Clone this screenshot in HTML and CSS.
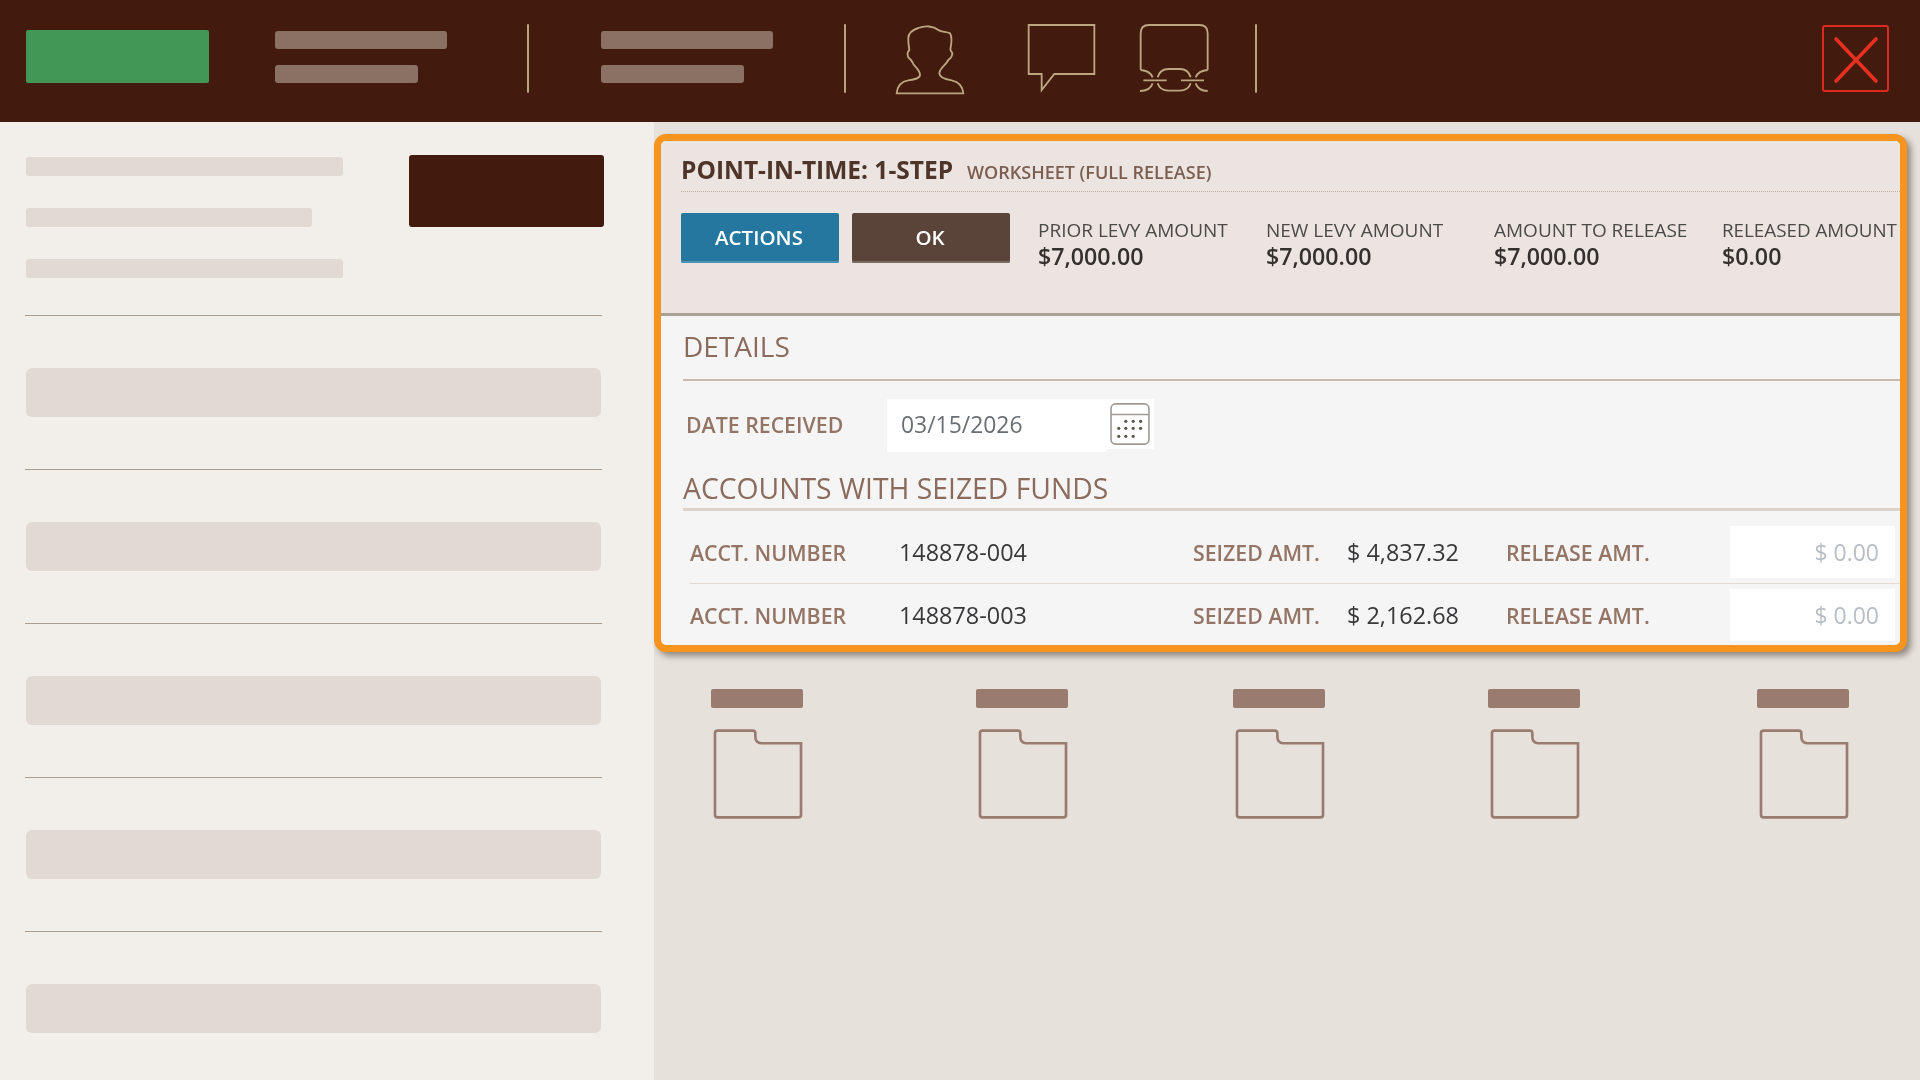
FILE: index.html
```html
<!DOCTYPE html>
<html lang="en">
<head>
<meta charset="utf-8">
<title>Point-in-Time: 1-Step</title>
<link rel="stylesheet" href="styles.css">
</head>
<body>
<svg class="defs" width="0" height="0" aria-hidden="true">
  <symbol id="folder" viewBox="100 175 270 272">
    <path d="M105 188Q105 180 113 180H219Q227 180 227 188V198Q227 218 245 218H365V434Q365 442 357 442H113Q105 442 105 434Z"/>
  </symbol>
</svg>
<header class="topbar">
  <div class="brand"></div>
  <div class="bars bars-a"><span class="bar long"></span><span class="bar short"></span></div>
  <span class="vline vline-a"></span>
  <div class="bars bars-b"><span class="bar long"></span><span class="bar short"></span></div>
  <span class="vline vline-b"></span>
  <svg class="tool tool-user" viewBox="165 75 210 210" width="70" height="70"><path d="M170 280H370C368 258 355 245 335 241C315 238 298 232 298 220C298 205 318 195 325 180C332 175 337 168 337 160C335 155 331 152 331 148C335 130 336 110 330 100C320 93 305 98 295 90C280 78 255 76 235 84C215 90 205 100 205 115C204 130 207 140 208 150C203 155 202 165 205 172C210 178 215 180 218 188C222 200 240 208 240 225C240 235 225 238 205 241C185 244 172 258 170 280Z"/></svg>
  <svg class="tool tool-chat" viewBox="560 72 210 210" width="70" height="70"><path d="M565 75H762V222H642L604 270V222H565Z"/></svg>
  <svg class="tool tool-link" viewBox="897 72 210 210" width="70" height="70"><path d="M902 210V100Q902 75 927 75H1078Q1103 75 1103 100V210M902 210Q930 212 938 232M900 273Q930 273 938 250M910 241H980M953 232Q960 207 985 207H1020Q1045 207 1052 232M953 250Q960 272 985 272H1020Q1045 272 1052 250M1103 210Q1075 212 1067 232M1103 273Q1075 273 1067 250M1023 241H1092"/></svg>
  <span class="vline vline-c"></span>
  <button class="close" aria-label="Close"><svg viewBox="0 0 62 62" width="62" height="62"><path d="M11 11L51 53M51 11L11 53"/></svg></button>
</header>

<div class="layout">
  <aside class="sidebar">
    <div class="side-top">
      <div class="side-lines">
        <span class="ph ph-a"></span>
        <span class="ph ph-b"></span>
        <span class="ph ph-a"></span>
      </div>
      <div class="side-btn"></div>
    </div>
    <div class="side-row"><span class="ph-row"></span></div>
    <div class="side-row"><span class="ph-row"></span></div>
    <div class="side-row"><span class="ph-row"></span></div>
    <div class="side-row"><span class="ph-row"></span></div>
    <div class="side-row"><span class="ph-row"></span></div>
  </aside>

  <main class="content">
    <section class="panel">
      <div class="panel-head">
        <div class="title-row">
          <h1 class="title">POINT-IN-TIME: 1-STEP</h1>
          <span class="subtitle">WORKSHEET (FULL RELEASE)</span>
        </div>
        <div class="action-row">
          <button class="btn btn-blue">ACTIONS</button>
          <button class="btn btn-brown">OK</button>
          <div class="stats">
            <div class="stat"><span class="stat-label">PRIOR LEVY AMOUNT</span><span class="stat-value">$7,000.00</span></div>
            <div class="stat"><span class="stat-label">NEW LEVY AMOUNT</span><span class="stat-value">$7,000.00</span></div>
            <div class="stat"><span class="stat-label">AMOUNT TO RELEASE</span><span class="stat-value">$7,000.00</span></div>
            <div class="stat"><span class="stat-label stat-label-last">RELEASED AMOUNT</span><span class="stat-value">$0.00</span></div>
          </div>
        </div>
      </div>
      <div class="panel-body">
        <h2 class="section section-details">DETAILS</h2>
        <div class="date-row">
          <span class="field-label date-label">DATE RECEIVED</span>
          <div class="date-input">03/15/2026</div>
          <div class="cal-wrap">
            <svg class="cal" viewBox="85 33 130 137" width="42" height="44">
              <rect class="cal-frame" x="91" y="39" width="118" height="125" rx="14"/>
              <path class="cal-frame" d="M91 72H209"/>
              <g class="cal-dots">
                <circle cx="137" cy="93" r="5"/><circle cx="160" cy="93" r="5"/><circle cx="183" cy="93" r="5"/>
                <circle cx="115" cy="115" r="5"/><circle cx="137" cy="115" r="5"/><circle cx="160" cy="115" r="5"/><circle cx="183" cy="115" r="5"/>
                <circle cx="115" cy="140" r="5"/><circle cx="137" cy="140" r="5"/><circle cx="160" cy="140" r="5"/>
              </g>
            </svg>
          </div>
        </div>
        <h2 class="section section-accounts">ACCOUNTS WITH SEIZED FUNDS</h2>
        <div class="acct acct-first">
          <span class="field-label">ACCT. NUMBER</span>
          <span class="acct-value">148878-004</span>
          <span class="field-label">SEIZED AMT.</span>
          <span class="acct-value">$ 4,837.32</span>
          <span class="field-label">RELEASE AMT.</span>
          <div class="amt-input">$ 0.00</div>
        </div>
        <div class="acct acct-second">
          <span class="field-label">ACCT. NUMBER</span>
          <span class="acct-value">148878-003</span>
          <span class="field-label">SEIZED AMT.</span>
          <span class="acct-value">$ 2,162.68</span>
          <span class="field-label">RELEASE AMT.</span>
          <div class="amt-input">$ 0.00</div>
        </div>
      </div>
    </section>

    <div class="folders">
      <div class="folder"><span class="folder-tag"></span><svg class="folder-icon"><use href="#folder"/></svg></div>
      <div class="folder"><span class="folder-tag"></span><svg class="folder-icon"><use href="#folder"/></svg></div>
      <div class="folder"><span class="folder-tag"></span><svg class="folder-icon"><use href="#folder"/></svg></div>
      <div class="folder"><span class="folder-tag"></span><svg class="folder-icon"><use href="#folder"/></svg></div>
      <div class="folder"><span class="folder-tag"></span><svg class="folder-icon"><use href="#folder"/></svg></div>
    </div>
  </main>
</div>
</body>
</html>
```

FILE: styles.css
```css
* { box-sizing: border-box; }
html, body { margin: 0; height: 100%; }
body {
  width: 1920px;
  height: 1080px;
  overflow: hidden;
  font-family: "Open Sans", "Liberation Sans", sans-serif;
  background: #e6e1db;
}
.defs { display: block; height: 0; }
h1, h2 { margin: 0; }

/* top bar */
.topbar {
  height: 122px;
  background: #431a0e;
  display: flex;
  align-items: flex-start;
}
.brand {
  width: 183px;
  height: 53px;
  margin: 30px 0 0 26px;
  background: #429757;
  border-radius: 2px;
}
.bars { display: flex; flex-direction: column; gap: 16px; margin-top: 31px; }
.bars-a { width: 172px; margin-left: 66px; }
.bars-b { width: 172px; margin-left: 72px; }
.bar { display: block; height: 18px; background: #8b7163; border-radius: 3px; }
.bar.long { width: 172px; }
.bar.short { width: 143px; }
.vline { width: 2px; height: 69px; margin-top: 24px; background: #b9a37f; border-radius: 1px; }
.vline-a { margin-left: 80px; }
.vline-b { margin-left: 71px; }
.vline-c { margin-left: 46px; }
.tool { fill: none; stroke: #bca680; stroke-width: 5.5; margin-top: 25px; }
.tool-user { margin-left: 49px; }
.tool-chat { margin-left: 62px; margin-top: 24px; }
.tool-link { margin-left: 42px; margin-top: 24px; }
.close {
  width: 67px;
  height: 67px;
  margin: 25px 0 0 565px;
  padding: 0;
  display: flex;
  align-items: center;
  justify-content: center;
  background: none;
  border: 2px solid #dd2a20;
  border-radius: 3px;
}
.close path { fill: none; stroke: #e8301f; stroke-width: 3.6; stroke-linecap: round; }

/* layout */
.layout { display: grid; grid-template-columns: 654px minmax(0, 1fr); height: 958px; }

/* sidebar */
.sidebar { background: #f2eeea; padding: 33px 52px 0 25px; }
.side-top {
  display: flex;
  justify-content: space-between;
  height: 161px;
  border-bottom: 1.5px solid #a89e94;
}
.side-lines { display: flex; flex-direction: column; gap: 32px; padding: 2px 0 0 1px; }
.ph { display: block; height: 19px; background: #e1dad4; border-radius: 3px; }
.ph-a { width: 317px; }
.ph-b { width: 286px; }
.side-btn { width: 195px; height: 72px; margin-right: -2px; background: #431a0e; border-radius: 3px; }
.side-row {
  height: 154px;
  padding: 52px 0 0 1px;
  border-bottom: 1.5px solid #a89e94;
}
.side-row:last-child { border-bottom: none; }
.ph-row { display: block; width: 575px; height: 49px; background: #e1dad4; border-radius: 6px; }

/* panel */
.content { min-width: 0; padding: 12px 13px 0 0; }
.panel {
  height: 518px;
  border: 7px solid #f7941d;
  border-radius: 12px;
  background: #f5f5f5;
  box-shadow: 4px 4px 6px rgba(40, 30, 20, .45);
  overflow: hidden;
}
.panel-head {
  height: 175px;
  padding-left: 20px;
  background: #ebe4e0;
  border-bottom: 3px solid #a9a097;
}
.title-row {
  display: flex;
  align-items: baseline;
  gap: 14px;
  height: 51px;
  padding-top: 13px;
  border-bottom: 1.5px dotted #bfafa4;
}
.title { font-size: 24.5px; font-weight: 700; line-height: 32px; color: #4f3529; filter: blur(.5px); }
.subtitle { font-size: 18px; font-weight: 600; color: #7b5e50; filter: blur(.5px); }
.action-row { display: flex; margin-top: 21px; gap: 13px; }
.btn {
  width: 158px;
  height: 50px;
  padding: 0 2px 2px 0;
  border: none;
  border-radius: 2px;
  font: 600 20.5px "Open Sans", sans-serif;
  color: #fff;
  filter: blur(.4px);
}
.btn-blue { background: #26779f; box-shadow: inset 0 -2px 0 #4c93b5; }
.btn-brown { background: #5a4439; box-shadow: inset 0 -2px 0 #7d6a60; }
.stats {
  display: grid;
  grid-template-columns: 228px 228px 228px 176px;
  margin-left: 15px;
  padding-top: 5px;
  filter: blur(.45px);
}
.stat { display: flex; flex-direction: column; white-space: nowrap; }
.stat-label { font-size: 19px; line-height: 24px; color: #4c4a48; }
.stat-label-last { font-size: 18.8px; }
.stat-value { font-size: 23.2px; font-weight: 600; line-height: 29px; color: #34302e; }

.section {
  margin-left: 22px;
  font-weight: 400;
  color: #8a6b5c;
  filter: blur(.5px);
}
.section-details {
  height: 65px;
  font-size: 28px;
  line-height: 60px;
  border-bottom: 2px solid #c8baaf;
}
.section-accounts {
  height: 46px;
  margin-top: 13px;
  font-size: 28.3px;
  line-height: 47px;
  border-bottom: 3px solid #dcd3cc;
}
.field-label { font-size: 21.3px; font-weight: 600; color: #937465; filter: blur(.45px); white-space: nowrap; }
.date-row { display: flex; align-items: flex-start; margin-top: 18px; }
.date-label { width: 201px; margin-left: 25px; line-height: 51px; }
.date-input {
  width: 220px;
  height: 53px;
  padding-left: 14px;
  background: #fff;
  font-size: 22.9px;
  line-height: 51px;
  color: #6a6f73;
  filter: blur(.45px);
}
.cal-wrap {
  width: 47px;
  height: 50px;
  padding-right: 2px;
  display: flex;
  align-items: center;
  justify-content: center;
  background: #fff;
}
.cal-frame { fill: none; stroke: #a09a94; stroke-width: 5; }
.cal-dots { fill: #5c5650; }

.acct {
  display: grid;
  grid-template-columns: 209px 294px 154px 159px 224px 165px;
  align-items: center;
  margin-left: 29px;
  border-bottom: 1.5px solid #e2dad4;
}
.acct-first { height: 73px; padding-top: 13px; padding-bottom: 3px; }
.acct-second { height: 58px; padding-top: 5px; padding-bottom: 1px; border-bottom: none; }
.acct-value { font-size: 23.4px; color: #38383a; filter: blur(.45px); white-space: nowrap; }
.amt-input {
  height: 52px;
  padding-right: 16px;
  background: #fff;
  text-align: right;
  font-size: 23px;
  line-height: 52px;
  color: #b7bec4;
  filter: blur(.45px);
}

/* folders */
.folders {
  display: grid;
  grid-template-columns: 265px 257px 255px 269px 92px;
  margin: 37px 0 0 57px;
}
.folder { display: flex; flex-direction: column; align-items: flex-start; }
.folder-tag { width: 92px; height: 19px; background: #997b6f; border-radius: 2px; }
.folder-icon { width: 90px; height: 90px; margin: 21px 0 0 2px; fill: none; stroke: #997b6f; stroke-width: 8; }
```
